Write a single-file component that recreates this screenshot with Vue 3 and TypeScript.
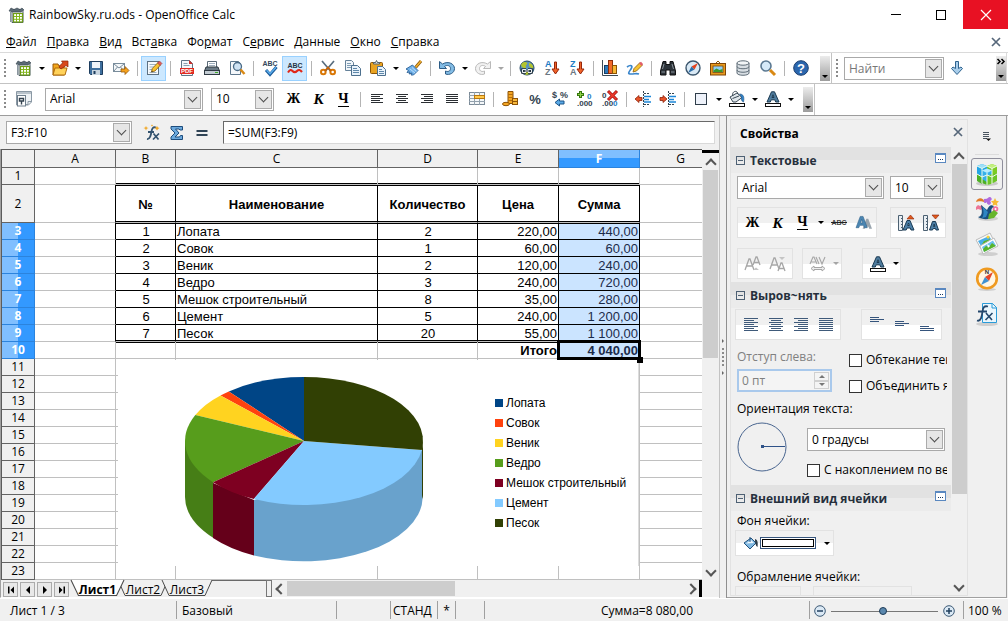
<script setup lang="ts">
import { computed, ref } from 'vue'

interface Tool {
  icon?: string
  title?: string
  sep?: boolean
  drop?: boolean
  on?: boolean
  dim?: boolean
  glyph?: string
  cls?: string
}

const icons: Record<string, string> = {
  doc: '<path d="M3 2.500h9l2 2v11H3z" fill="#eef1f3" stroke="#4a5a66"/><path d="M0 4l2-3 3 1.500L8 1l3 1.500L13 1l2 2-3 2H4z" fill="#5b6a75" stroke="#34414b" stroke-width=".6"/><path d="M1.500 4v11" stroke="#8a969e"/><rect x="4.500" y="6.500" width="9" height="8.500" fill="#fff" stroke="#6f9d16" stroke-width="1.200"/><path d="M5 9.500h8M5 12.300h8M7.500 7v8M10.500 7v8" stroke="#84b81c"/>',
  open: '<path d="M1 4h5l1 2h5v9H1z" fill="#f3a71c" stroke="#9a5a08"/><path d="M3 8h12l-2 7H1z" fill="#ffd25a" stroke="#b06c0c"/><path d="M7 7c1-2 2-3 4-4L9.500 1H16v6l-2-1.500L9 9z" fill="#d9481c" stroke="#8a2407" stroke-width=".7"/>',
  save: '<path d="M1.500 1.500h13v13h-12l-1-1z" fill="#3e6f9e" stroke="#1d3d5e"/><rect x="4" y="2" width="8" height="6" fill="#eef4fa"/><rect x="4" y="10" width="8" height="5" fill="#c9d5df"/><rect x="5.500" y="11" width="2" height="3" fill="#1d3d5e"/>',
  mail: '<rect x=".5" y="3.500" width="11" height="8" fill="#f5f8fa" stroke="#7a8d9c"/><path d="M1 4l5 4 5-4M1 11l3.500-4M11 11L7.500 7" fill="none" stroke="#7a8d9c"/><path d="M8 9h4V6.500l4 4-4 4V12H8z" fill="#f5a11c" stroke="#94580a" stroke-width=".8"/>',
  edit: '<rect x="1.500" y="1.500" width="11" height="13" fill="#f6f9fc" stroke="#5d7182"/><path d="M3.500 4.500h7M3.500 7h5M3.500 9.500h4M3.500 12.500h7" stroke="#9db0c0"/><path d="M5.500 12l.8-3.500L12 2.500 14.500 5 9 11z" fill="#f7c331" stroke="#8a5a0a" stroke-width=".8"/><path d="M11.500 3L13.500 1 16 3.500l-2 2z" fill="#e0605a" stroke="#8e2630" stroke-width=".5"/><path d="M5.500 12l.4-1.500 1 1z" fill="#222"/>',
  pdf: '<path d="M2.500.5h8l3 3v12h-11z" fill="#f4f7fa" stroke="#607486"/><path d="M10 0v4h4z" fill="#c9302c"/><path d="M4.500 3.500h4M4.500 5.500h6" stroke="#8b9fb0"/><rect x="1" y="8" width="14" height="6" fill="#e02a22"/><text x="8" y="13" font-size="6" font-weight="bold" fill="#fff" text-anchor="middle" font-family="Liberation Sans,sans-serif">PDF</text>',
  print: '<path d="M3.500 1.500h9v6h-9z" fill="#fff" stroke="#5b6b78"/><path d="M5 3.500h6M5 5.500h6" stroke="#9fb0bf"/><path d="M2 7h12l1.500 4H.5z" fill="#6b7a86" stroke="#2f3a43"/><rect x=".5" y="10.500" width="15" height="4" fill="#c3ccd3" stroke="#2f3a43"/><path d="M11 12.500h3" stroke="#3fae2a"/>',
  preview: '<path d="M1.500 1.500h8l2 2v11h-10z" fill="#f5f8fb" stroke="#5f788e"/><circle cx="8.500" cy="6.500" r="4" fill="#cfe3f4" stroke="#496a86" stroke-width="1.300"/><path d="M11.500 9.500l4 4.500" stroke="#d98914" stroke-width="2.500"/>',
  spell: '<text x="8" y="6" font-size="7" font-weight="bold" fill="#33475a" text-anchor="middle" font-family="Liberation Sans,sans-serif">ABC</text><path d="M4 10l4 4.500L14.500 7" fill="none" stroke="#1c5c9c" stroke-width="3"/><path d="M4.500 10.300l3.500 3.500 6-6.500" fill="none" stroke="#5cb0ee" stroke-width="1.300"/>',
  auto: '<text x="8" y="8" font-size="7" font-weight="bold" fill="#263646" text-anchor="middle" font-family="Liberation Sans,sans-serif">ABC</text><path d="M1 12.500c2-3 3-3 4.500-1.500s3 1.500 4.500 0 3-1.500 5 1" fill="none" stroke="#e02818" stroke-width="2.200"/>',
  cut: '<path d="M2 1l8.500 10M14 1L5.500 11" stroke="#596d7e" stroke-width="1.700"/><circle cx="3.300" cy="12" r="2.300" fill="none" stroke="#d97706" stroke-width="2"/><circle cx="12.700" cy="12" r="2.300" fill="none" stroke="#d97706" stroke-width="2"/><path d="M5 11l3-3.500 3 3.500" fill="none" stroke="#c4630a" stroke-width="1.800"/>',
  copy: '<path d="M.5.5h6l2 2v8h-8z" fill="#f1f6fa" stroke="#66829a"/><path d="M2 3.500h4M2 5.500h5M2 7.500h5" stroke="#7f9db5"/><path d="M6.500 5.500h6l3 3v7h-9z" fill="#e8f2fb" stroke="#4d708e"/><path d="M8 8.500h4M8 10.500h6M8 12.500h6" stroke="#5f88aa"/>',
  paste: '<rect x=".5" y="2.500" width="12" height="11" rx="1" fill="#e9a322" stroke="#8a5507"/><path d="M3.500 4V2.500h2L6.500.500l1 2h2V4z" fill="#dfe5ea" stroke="#54626e"/><path d="M7.500 6.500h5l3 3v6h-8z" fill="#eaf3fb" stroke="#4d708e"/><path d="M9 9.500h3M9 11.500h5M9 13.500h5" stroke="#5f88aa"/>',
  brush: '<path d="M9.500 7.500L15 1" stroke="#8a5507" stroke-width="3"/><path d="M9.500 7.500L15 1" stroke="#f2b12e" stroke-width="1.500"/><path d="M0 9l6.500-4 5.500 5.500L7.500 15H5l1-2-3 1 1-2-3 .5 1.500-2z" fill="#71b2ea" stroke="#285f95" stroke-width=".9"/><path d="M4 9l5 4M6 7.500l4.500 4" stroke="#d3eafb" stroke-width=".8"/>',
  undo: '<path d="M.5 1.500v7h7L5.500 6.500c2.500-2 6-1 6 2s-3 3.500-5 2.500v3c4 1.500 9-1 9-5.500S9.500.5 3.500 4z" fill="#82bbe4" stroke="#2c5c86"/>',
  redo: '<path d="M15.500 1.500v7h-7l2-2c-2.500-2-6-1-6 2s3 3.500 5 2.500v3c-4 1.500-9-1-9-5.500s6-8 12-4.500z" fill="#f1f1f1" stroke="#b9b9b9"/>',
  link: '<circle cx="8" cy="8" r="7" fill="#5b93bd" stroke="#23465f"/><path d="M2 5c2-4 5-3 6-2s-2 2-1 4-4 2-5-2M10 3c3 0 5 4 4 5s-3-1-4-2zM4 12l4-1 3 3-4 1z" fill="#b3c42d"/><path d="M7 9.500H3.500v3H7M9 9.500h3.500v3H9M6 11h4" fill="none" stroke="#24313c" stroke-width="2.600"/><path d="M7 9.500H3.500v3H7M9 9.500h3.500v3H9M6 11h4" fill="none" stroke="#eef2f5"/>',
  az: '<text x="1" y="6.500" font-size="9" font-weight="bold" fill="#1c7cc4" font-family="Liberation Sans,sans-serif">A</text><text x="1" y="15" font-size="9" font-weight="bold" fill="#6b7782" font-family="Liberation Sans,sans-serif">Z</text><path d="M10.500 2h2v7H15l-3.500 5L8 9h2.500z" fill="#f0642a" stroke="#97260a"/>',
  za: '<text x="1" y="6.500" font-size="9" font-weight="bold" fill="#1c7cc4" font-family="Liberation Sans,sans-serif">Z</text><text x="1" y="15" font-size="9" font-weight="bold" fill="#6b7782" font-family="Liberation Sans,sans-serif">A</text><path d="M10.500 2h2v7H15l-3.500 5L8 9h2.500z" fill="#f0642a" stroke="#97260a"/>',
  chart: '<path d="M.5 0v15.500H16" fill="none" stroke="#3c4a55"/><rect x="2.500" y="5.500" width="4" height="8" fill="#2e79b9" stroke="#153e66"/><rect x="6.500" y=".5" width="4" height="13" fill="#f26a2a" stroke="#8e2c0a"/><rect x="10.500" y="5.500" width="4" height="8" fill="#f7b733" stroke="#8a5507"/>',
  draw: '<path d="M0 7c4-3 6-1 4 2s-4 5 0 5 5-1 8 0" fill="none" stroke="#3a86cc" stroke-width="1.700"/><path d="M6 12l1-3.500L13 2.500l2.500 2.500L9.500 11z" fill="#f7c331" stroke="#8a5a0a" stroke-width=".8"/><path d="M12 3.500l2-1.800L16 4l-1.500 2z" fill="#e25d6c"/>',
  find: '<path d="M3 1.500h3v3h4v-3h3L15.500 11v4H10v-5H6v5H.5v-4z" fill="#2c3339" stroke="#111"/><path d="M1.500 12h3.500M11 12h3.500M4 4L2.500 9M12 4l1.500 5" stroke="#8a949c"/>',
  nav: '<circle cx="8" cy="8" r="7" fill="#d9e9f5" stroke="#3b566d" stroke-width="1.400"/><path d="M13 3L9.500 9.500 6.500 6.500z" fill="#e5431d"/><path d="M3 13l3.500-6.500 3 3z" fill="#2e6ea8"/>',
  gallery: '<path d="M5 4l3-3 3 3" fill="none" stroke="#8c5a0d"/><rect x=".5" y="3.500" width="15" height="11.500" fill="#e89a1e" stroke="#7e4607"/><rect x="3" y="6" width="10" height="6.500" fill="#8fd0f5" stroke="#7e4607" stroke-width=".8"/><path d="M3.500 10.500l3-2 3 1.500 3-1v3h-9z" fill="#3c9a2c"/>',
  db: '<path d="M2 3v10c0 3 12 3 12 0V3" fill="#d8dee3" stroke="#5f6d78"/><ellipse cx="8" cy="3" rx="6" ry="2.200" fill="#f2f5f7" stroke="#5f6d78"/><path d="M2 6.500c0 3 12 3 12 0M2 10c0 3 12 3 12 0" fill="none" stroke="#5f6d78"/>',
  zoom: '<circle cx="6" cy="6" r="5" fill="#d5e9f8" stroke="#5a7891" stroke-width="1.600"/><path d="M10 10l5 5" stroke="#d98914" stroke-width="3"/>',
  help: '<circle cx="8" cy="8" r="7.300" fill="#2b66ad" stroke="#1b3f70"/><text x="8" y="12.500" font-size="13" font-weight="bold" fill="#fff" text-anchor="middle" font-family="Liberation Sans,sans-serif">?</text>',
  styles: '<path d="M.5.500h15v10.500l-3 3H.5z" fill="#eef2f5" stroke="#8a98a4"/><path d="M1 2h14" stroke="#b9c3cb" stroke-width="2"/><rect x="1.500" y="4.500" width="8" height="10.500" fill="#fff" stroke="#6f7f8c"/><path d="M3.500 7.500h4v2.500h-4zM5.500 10v3.500" fill="none" stroke="#33424f" stroke-width="1.400"/><path d="M10 13.500h2v-3h3" fill="none" stroke="#8a98a4"/>',
  left: '<path d="M2 3.500h12M2 5.500h9M2 7.500h12M2 9.500h9M2 11.500h12" stroke="#2b2f33"/>',
  center: '<path d="M2 3.500h12M4 5.500h8M2 7.500h12M4 9.500h8M2 11.500h12" stroke="#2b2f33"/>',
  right: '<path d="M2 3.500h12M5 5.500h9M2 7.500h12M5 9.500h9M2 11.500h12" stroke="#2b2f33"/>',
  just: '<path d="M2 3.500h12M2 5.500h12M2 7.500h12M2 9.500h12M2 11.500h12" stroke="#2b2f33"/>',
  merge: '<rect x=".5" y="1.500" width="15" height="12" fill="#f4f7f9" stroke="#7c8b98"/><path d="M0 4.500h16M0 7.500h16M0 10.500h16M5.500 1v13M10.500 1v13" stroke="#93a1ad"/><rect x="5.500" y="4.500" width="10" height="3" fill="#ffc94a" stroke="#b9770f"/>',
  coins: '<path d="M6 .5h5v12H6z" fill="#f5a623" stroke="#8c5206"/><path d="M6 3.500h5M6 6.500h5M6 9.500h5" stroke="#b36e0c"/><rect x="10.500" y="7.500" width="5" height="6" fill="#f8b93c" stroke="#8c5206"/><path d="M10.500 10.500h5" stroke="#8c5206"/><ellipse cx="4" cy="13" rx="3.500" ry="1.700" fill="#f5a623" stroke="#8c5206"/>',
  pct: '<text x="8" y="13" font-size="13" font-weight="bold" fill="#33434f" text-anchor="middle" font-family="Liberation Sans,sans-serif">%</text>',
  std: '<text x="0" y="7" font-size="9" font-weight="bold" fill="#33434f" font-family="Liberation Sans,sans-serif">$</text><text x="8" y="7" font-size="9" font-weight="bold" fill="#33434f" font-family="Liberation Sans,sans-serif">%</text><path d="M3 11.500L7.500 8v2H12v3H7.500v2z" fill="#5aa9e6" stroke="#1c5488"/>',
  adddec: '<path d="M3.500 0v7M0 3.500h7" stroke="#37780f" stroke-width="3"/><path d="M3.500 1v5M1 3.500h5" stroke="#8fd14a"/><text x="10" y="8" font-size="8" font-weight="bold" fill="#1c7cc4" font-family="Liberation Sans,sans-serif">0</text><text x="0" y="15" font-size="8" font-weight="bold" fill="#33434f" font-family="Liberation Sans,sans-serif">.000</text>',
  deldec: '<text x="0" y="7" font-size="8" font-weight="bold" fill="#33434f" font-family="Liberation Sans,sans-serif">0</text><path d="M6 0l9 9M15 0L6 9" stroke="#a30f0f" stroke-width="3"/><path d="M6.500.5l8 8M14.500.5l-8 8" stroke="#ef3a2c" stroke-width="1.600"/><text x="0" y="15" font-size="8" font-weight="bold" fill="#33434f" font-family="Liberation Sans,sans-serif">.00</text><text x="11" y="15" font-size="8" font-weight="bold" fill="#1c7cc4" font-family="Liberation Sans,sans-serif">0</text>',
  outdent: '<path d="M9 2.500h6M9 13.500h6M8.500 0v16" stroke="#33434f" stroke-dasharray="2 1"/><path d="M9 5.500h7M9 8.500h5M9 11h7" stroke="#1c86d8" stroke-width="1.700"/><path d="M0 8L4 4.500v2h3v3H4v2z" fill="#e8542a" stroke="#8b220a" stroke-width=".8"/>',
  indent: '<path d="M9 2.500h6M9 13.500h6M8.500 0v16" stroke="#33434f" stroke-dasharray="2 1"/><path d="M9 5.500h7M9 8.500h5M9 11h7" stroke="#1c86d8" stroke-width="1.700"/><path d="M7 8L3 4.500v2H0v3h3v2z" fill="#e8542a" stroke="#8b220a" stroke-width=".8"/>',
  border: '<rect x="2.500" y="2.500" width="11" height="11" fill="#eef2fa" stroke="#2f3d4a"/>',
  fill: '<path d="M1 6l7-4 5 4.500-6 4.500H4z" fill="#dfe6eb" stroke="#3a4955"/><path d="M4 5c-2-4 4-7 5-2M3.500 7.500L10 5" fill="none" stroke="#3a4955"/><path d="M10.500 3c4 0 5 3 4 8-2-.5-2.500-3-2-5z" fill="#2f82c9" stroke="#1b4f80" stroke-width=".6"/><rect x=".5" y="12.500" width="15" height="3" fill="#fff" stroke="#111"/>',
  color: '<path d="M2 11L6.500.8h3L14 11h-3.300l-.9-2.200H6.200L5.300 11zM7 6.500h2L8 3.700z" fill="#4f7c9e" stroke="#1b3a52"/><rect x=".5" y="12.500" width="15" height="3" fill="#fff" stroke="#111"/>',
  down: '<path d="M6.500 1.500h3v7L12 7l1.500 1.500L8 14.500 2.500 8.500 4 7l2.500 1.500z" fill="#a8cdea" stroke="#2f638f"/>',
  fx: '<path d="M12 2.500c-3-1-4 1-4.500 4S6 14.500 3 14M4 7h6" fill="none" stroke="#33536f" stroke-width="1.800"/><path d="M9.500 8.500l5 6M15 8.500l-6 6" stroke="#33536f" stroke-width="1.700"/><path d="M2 1l.8 1.500L4.500 3l-1.700.8L2 5.500l-.8-1.700L-.5 3l1.700-.5zM13 1l1 1.500 1.500.5L14 4l-1 1.500L12 4l-1.500-1L12 2.500zM8-.5l1 1-1 1-1-1z" fill="#f0a92a"/>',
  sum: '<path d="M2 1.500h11.500V5H11l-1-1H6.500L10 8l-4 4h4.500l1-1.500h2v4H2V12l4-4-4-4z" fill="#6ba8dc" stroke="#1d4c7c"/>',
  eq: '<path d="M2.500 6h11M2.500 10h11" stroke="#2f4355" stroke-width="1.800"/>',
  abc: '<text x="8" y="10" font-size="7" font-weight="bold" fill="#444" text-anchor="middle" font-family="Liberation Sans,sans-serif">ABC</text><path d="M0 7.500h16" stroke="#222"/>',
  shadow: '<path d="M7 14L11 3.500h2L17 14h-3l-.7-2h-3l-.8 2z" fill="#9aa5ae"/><path d="M0 13L4.500 1h3L12 13H9l-1-2.500H4L3 13zM5 8h2L6 4z" fill="#4b86b2" stroke="#2d5f88" stroke-width=".6"/>',
  grow: '<path d="M.5.5h4v15h-4z" fill="#e8eef3" stroke="#4c6172"/><path d="M3 3.500h2M3 6.500h2M3 9.500h2M3 12.500h2" stroke="#4c6172"/><path d="M5 15L9 5.500h3L16 15h-3l-.8-2H9l-.8 2zM9.700 10.500h1.600L10.500 8z" fill="#4c7fa6" stroke="#183a55"/><path d="M9 4l3.500-4L16 4z" fill="#e05a1c" stroke="#8b220a" stroke-width=".6"/>',
  shrink: '<path d="M.5.5h4v15h-4z" fill="#e8eef3" stroke="#4c6172"/><path d="M3 3.500h2M3 6.500h2M3 9.500h2M3 12.500h2" stroke="#4c6172"/><path d="M6.500 15l3-8.500h3l3 8.500H13l-.5-1.500h-2.300L9.500 15zM10.500 11.500h1.300L11.200 9z" fill="#4c7fa6" stroke="#183a55"/><path d="M9 0h7l-3.500 4z" fill="#e05a1c" stroke="#8b220a" stroke-width=".6"/>',
  sup: '<path d="M0 14L4 3h1l4 11M2 10h5M8 9l3-8h1l3 8M9 6.500h5" fill="none" stroke="#a6a6a6" stroke-width="1.300"/><path d="M8 14l3-2.500 3 2.500z" fill="#c4c4c4"/>',
  sub: '<path d="M0 13L4 2h1l4 11M2 9h5M8 15l3-8h1l3 8M9 12.500h5" fill="none" stroke="#a6a6a6" stroke-width="1.300"/><path d="M9 1h6l-3 3z" fill="#c4c4c4"/>',
  spacing: '<path d="M0 8l3-7h1l3 7M1.500 6h4M6 1l3 7M9 1l3 7 3-7" fill="none" stroke="#a6a6a6" stroke-width="1.100"/><path d="M1 12.500L4 10v1.500h8V10l3 2.500-3 2.500v-1.500H4V15z" fill="#eee" stroke="#a6a6a6"/>',
  sl: '<path d="M1 1.500h14M1 3.500h10M1 5.500h14M1 7.500h10M1 9.500h14M1 11.500h10M1 13.500h14" stroke="#3f5a7a"/>',
  sc: '<path d="M1 1.500h14M3 3.500h10M1 5.500h14M3 7.500h10M1 9.500h14M3 11.500h10M1 13.500h14" stroke="#3f5a7a"/>',
  sr: '<path d="M1 1.500h14M5 3.500h10M1 5.500h14M5 7.500h10M1 9.500h14M5 11.500h10M1 13.500h14" stroke="#3f5a7a"/>',
  sj: '<path d="M1 1.500h14M1 3.500h14M1 5.500h14M1 7.500h14M1 9.500h14M1 11.500h14M1 13.500h14" stroke="#3f5a7a"/>',
  vt: '<path d="M1 .5h9M1 2.500h14M1 4.500h9" stroke="#35547c"/>',
  vm: '<path d="M1 4.500h9M1 6.500h14M1 8.500h9" stroke="#35547c"/>',
  vb: '<path d="M1 9.500h9M1 11.500h14M1 13.500h14" stroke="#35547c"/>',
  bucket: '<path d="M1 8l7-5 5 5-6 6z" fill="#7fb8e2" stroke="#24527c"/><path d="M3 8.500l5-3.500 3 3z" fill="#eef6fc"/><path d="M7 7V2" stroke="#24527c"/><path d="M12 4c3 1 3 4 2.500 8-2-1-2-4-2.500-6z" fill="#2b3a47"/>',
}

const deckIcons: { title: string; svg: string }[] = [
  { title: 'Свойства', svg: '<ellipse cx="12" cy="21.500" rx="11" ry="2.500" fill="#c9c9c9"/><path d="M2 4l5-2 5 2v8l-5 3-5-3z" fill="#22a4e6"/><path d="M2 4l5-2 5 2-5 2.500z" fill="#9be0fa"/><path d="M12 4l5-2 5 2v8l-5 3-5-3z" fill="#7ccb22"/><path d="M12 4l5-2 5 2-5 2.500z" fill="#c2f07c"/><path d="M2 12l5 3v7l-5-3zM12 14v9l-5-2v-7z" fill="#4db026"/><path d="M7 8.500l5-2 5 2v8.500l-5 3-5-3z" fill="#35b0ea"/><path d="M7 8.500l5-2 5 2-5 2.500z" fill="#b8ecfc"/><path d="M12 14l5-2 5-1v8l-6 3-4 1z" fill="#6cc528"/><path d="M2 4l5 2.500v15M12 11v12M17 6.500V22M7 6.500L12 4l5 2.500L22 4M2 12l5 3 5-2 5 2 5-3" fill="none" stroke="#eefbea"/>' },
  { title: 'Стили', svg: '<ellipse cx="13" cy="21.500" rx="10" ry="2.500" fill="#d0d0d0"/><path d="M13 1a2 2 0 1 1 2 3 2 2 0 1 1-3 1 2 2 0 1 1-1-3z" fill="#b069dc"/><path d="M20 1l1.300 2.700 2.700.5-2 2 .5 2.800-2.500-1.300L17.500 9l.5-2.800-2-2 2.700-.5z" fill="#f8ba34"/><circle cx="20.500" cy="12" r="2.800" fill="#f06ea0"/><circle cx="20.500" cy="12" r="1" fill="#fff"/><path d="M1 5c1-5 8-5 8 0-2-1-6-1-8 0z" fill="#e07a28"/><path d="M1 10l2-2 2 1 2-1 1 3-2 2-3-1-2 1z" fill="#ed7596"/><path d="M3 20c5-1 4-6 3-12l6 5c2-5 5-6 7-3-4 1-3 6 0 9-4 4-11 4-16 1z" fill="#1b4f7e"/><path d="M7 9l6 6-2 5-4 1c2-3 2-8 0-12z" fill="#2e86c4"/><path d="M14 17l5-4 4 3-4 5-6 1z" fill="#67b52c"/>' },
  { title: 'Галерея', svg: '<ellipse cx="13" cy="22" rx="10" ry="2" fill="#cfcfcf"/><path d="M1 8l14-7 3 6L6 17z" fill="#fafafa" stroke="#bcbcbc"/><path d="M3 9l11-5 2 3L6 14z" fill="#48aee8"/><path d="M6 14l3-5 7-2-8 8z" fill="#58b42b"/><path d="M5 14L19 6l4 8-15 8z" fill="#fff" stroke="#bdbdbd"/><path d="M7 15l11-6.500 3 5-12 6.500z" fill="#6cc0ee"/><path d="M8 17l3-3 3 1 3-4 4 3-12 6z" fill="#58b42b"/><path d="M12 12l3 2-2 2z" fill="#fff"/><circle cx="13" cy="5" r="1.500" fill="#f8d33a"/>' },
  { title: 'Навигатор', svg: '<ellipse cx="12" cy="22.500" rx="9" ry="1.500" fill="#cfcfcf"/><circle cx="12" cy="11.500" r="9.800" fill="#fff6e4" stroke="#ef9a20" stroke-width="2.600"/><path d="M18 5l-4 9-4-4z" fill="#e4462a"/><path d="M6 18l4-8 4 4z" fill="#3f91d0"/><text x="12" y="7" font-size="6" font-weight="bold" fill="#333" text-anchor="middle" font-family="Liberation Sans,sans-serif">N</text>' },
  { title: 'Функции', svg: '<ellipse cx="12" cy="22" rx="11" ry="2" fill="#cfcfcf"/><path d="M7.500 1.500h10l4 4v15h-14z" fill="#eaf6fd" stroke="#2a9bd8"/><path d="M17 1v5h5" fill="none" stroke="#2a9bd8"/><path d="M13 4.500c-4-1-5 1-5.500 5S6 20 2 18.500M3 9.500h9" fill="none" stroke="#24476c" stroke-width="1.800"/><path d="M11 11l6 7M17.500 11l-7 7" stroke="#24476c" stroke-width="1.600"/>' },
]

const menu: [string, string, string][] = [
  ['', 'Ф', 'айл'], ['', 'П', 'равка'], ['', 'В', 'ид'], ['Вст', 'а', 'вка'], ['Фо', 'р', 'мат'],
  ['С', 'е', 'рвис'], ['', 'Д', 'анные'], ['', 'О', 'кно'], ['', 'С', 'правка'],
]

const t = (icon: string, title: string, extra: Partial<Tool> = {}): Tool => ({ icon, title, ...extra })
const sep: Tool = { sep: true }

const standard: Tool[] = [
  t('doc', 'Создать', { drop: true }), t('open', 'Открыть', { drop: true }), t('save', 'Сохранить'), t('mail', 'Отправить'), sep,
  t('edit', 'Правка файла', { on: true }), sep, t('pdf', 'Экспорт в PDF'), t('print', 'Печать'), t('preview', 'Просмотр'), sep,
  t('spell', 'Орфография'), t('auto', 'Автопроверка', { on: true }), sep, t('cut', 'Вырезать'), t('copy', 'Копировать'),
  t('paste', 'Вставить', { drop: true }), t('brush', 'Формат по образцу'), sep, t('undo', 'Отменить', { drop: true }),
  t('redo', 'Повторить', { drop: true, dim: true }), sep, t('link', 'Гиперссылка'), t('az', 'По возрастанию'), t('za', 'По убыванию'), sep,
  t('chart', 'Диаграмма'), t('draw', 'Рисунок'), sep, t('find', 'Найти и заменить'), t('nav', 'Навигатор'), t('gallery', 'Галерея'),
  t('db', 'Источники данных'), t('zoom', 'Масштаб'), sep, t('help', 'Справка'),
]

const format: Tool[] = [
  { glyph: 'Ж', cls: 'b', title: 'Жирный' }, { glyph: 'К', cls: 'i', title: 'Курсив' }, { glyph: 'Ч', cls: 'u', title: 'Подчёркнутый' }, sep,
  t('left', 'По левому краю'), t('center', 'По центру'), t('right', 'По правому краю'), t('just', 'По ширине'), t('merge', 'Объединить'), sep,
  t('coins', 'Денежный'), t('pct', 'Процентный'), t('std', 'Стандартный'), t('adddec', 'Добавить разряд'), t('deldec', 'Удалить разряд'), sep,
  t('outdent', 'Уменьшить отступ'), t('indent', 'Увеличить отступ'), sep,
  t('border', 'Обрамление', { drop: true }), t('fill', 'Цвет фона', { drop: true }), t('color', 'Цвет шрифта', { drop: true }),
]

interface Item { name: string; qty: number; price: number; color: string }
const items: Item[] = [
  { name: 'Лопата', qty: 2, price: 220, color: '#004586' },
  { name: 'Совок', qty: 1, price: 60, color: '#ff420e' },
  { name: 'Веник', qty: 2, price: 120, color: '#ffd320' },
  { name: 'Ведро', qty: 3, price: 240, color: '#579d1c' },
  { name: 'Мешок строительный', qty: 8, price: 35, color: '#7e0021' },
  { name: 'Цемент', qty: 5, price: 240, color: '#83caff' },
  { name: 'Песок', qty: 20, price: 55, color: '#314004' },
]

const money = (n: number): string => `${String(n).replace(/\B(?=(\d{3})+$)/g, ' ')},00`
const total = computed(() => items.reduce((s, i) => s + i.qty * i.price, 0))
const columns = ['A', 'B', 'C', 'D', 'E', 'F', 'G']
const tailRows = Array.from({ length: 13 }, (_, i) => i + 11)

const CX = 119
const CY = 65
const RX = 119
const RY = 64
const slices = computed(() => {
  let angle = 0
  const point = (a: number): string => `${(CX - RX * Math.sin(a)).toFixed(2)} ${(CY - RY * Math.cos(a)).toFixed(2)}`
  return items.map((i) => {
    const next = angle + (i.qty * i.price * 2 * Math.PI) / total.value
    const d = `M${CX} ${CY}L${point(angle)}A${RX} ${RY} 0 0 0 ${point(next)}Z`
    angle = next
    return { d, color: i.color }
  })
})

const find = ref('')
const cell = ref('F3:F10')
const formula = ref('=SUM(F3:F9)')
const zoomLevel = ref(48)
const sheet = ref('Лист1')
</script>

<template>
  <div class="window">
    <header class="title">
      <svg class="ic" viewBox="0 0 16 16" v-html="icons.doc"></svg>
      <span class="name">RainbowSky.ru.ods - OpenOffice Calc</span>
      <button class="win" aria-label="Свернуть"><svg viewBox="0 0 10 10"><path d="M0 4.500h10" stroke="#000" /></svg></button>
      <button class="win" aria-label="Развернуть"><svg viewBox="0 0 10 10"><rect x=".5" y=".5" width="9" height="9" fill="none" stroke="#000" /></svg></button>
      <button class="win close" aria-label="Закрыть"><svg viewBox="0 0 10 10"><path d="M0 0l10 10M10 0L0 10" stroke="#fff" stroke-width="1.200" /></svg></button>
    </header>

    <nav class="menu">
      <a v-for="m in menu" :key="m.join('')" href="#">{{ m[0] }}<u>{{ m[1] }}</u>{{ m[2] }}</a>
      <button class="doc-close" aria-label="Закрыть документ"><svg viewBox="0 0 8 8"><path d="M0 0l8 8M8 0L0 8" stroke="#56677a" stroke-width="1.700" /></svg></button>
    </nav>

    <div class="bar">
      <i class="grip"></i>
      <template v-for="(b, k) in standard" :key="k">
        <i v-if="b.sep" class="sep"></i>
        <template v-else>
          <button class="tb" :class="{ on: b.on }" :aria-label="b.title"><svg class="ic" viewBox="0 0 16 16" v-html="icons[b.icon!]"></svg></button>
          <button v-if="b.drop" class="dd" :class="{ dim: b.dim }" :aria-label="b.title + ': список'"></button>
        </template>
      </template>
      <button class="more" aria-label="Ещё"></button>
      <div class="findbar">
        <i class="grip"></i>
        <span class="combo find"><input v-model="find" placeholder="Найти" aria-label="Найти" /><button class="chev" aria-label="Список поиска"></button></span>
        <button class="tb" aria-label="Найти далее"><svg class="ic" viewBox="0 0 16 16" v-html="icons.down"></svg></button>
        <button class="more last" aria-label="Ещё"><svg viewBox="0 0 8 5"><path d="M.5 0L3 2.500.5 5M4.500 0L7 2.500 4.500 5" fill="none" stroke="#000" stroke-width="1.500" /></svg></button>
      </div>
    </div>

    <div class="bar second">
      <i class="grip"></i>
      <button class="tb" aria-label="Стили"><svg class="ic" viewBox="0 0 16 16" v-html="icons.styles"></svg></button>
      <span class="combo font"><select aria-label="Шрифт"><option>Arial</option></select><i class="chev"></i></span>
      <span class="combo size"><select aria-label="Размер"><option>10</option></select><i class="chev"></i></span>
      <template v-for="(b, k) in format" :key="k">
        <i v-if="b.sep" class="sep"></i>
        <template v-else>
          <button class="tb" :aria-label="b.title">
            <span v-if="b.glyph" class="gl" :class="b.cls">{{ b.glyph }}</span>
            <svg v-else class="ic" viewBox="0 0 16 16" v-html="icons[b.icon!]"></svg>
          </button>
          <button v-if="b.drop" class="dd" :aria-label="b.title + ': список'"></button>
        </template>
      </template>
      <button class="more" aria-label="Ещё"></button>
      <i class="edge"></i>
    </div>

    <div class="body">
      <main class="work">
        <div class="formula">
          <span class="combo cellname"><input v-model="cell" aria-label="Область листа" /><button class="chev" aria-label="Список областей"></button></span>
          <button class="tb" aria-label="Мастер функций"><svg class="ic" viewBox="0 0 16 16" v-html="icons.fx"></svg></button>
          <button class="tb" aria-label="Сумма"><svg class="ic" viewBox="0 0 16 16" v-html="icons.sum"></svg></button>
          <button class="tb" aria-label="Функция"><svg class="ic" viewBox="0 0 16 16" v-html="icons.eq"></svg></button>
          <input v-model="formula" class="line" aria-label="Строка формул" />
        </div>

        <div class="sheet">
          <div class="view">
            <table>
              <colgroup><col class="h" /><col class="a" /><col class="b" /><col class="c" /><col class="d" /><col class="a" /><col class="a" /><col /></colgroup>
              <thead>
                <tr><th></th><th v-for="c in columns" :key="c" :class="{ sel: c === 'F' }">{{ c }}</th></tr>
              </thead>
              <tbody>
                <tr class="first"><th>1</th><td></td><td v-for="n in 5" :key="n"></td><td></td></tr>
                <tr class="heads">
                  <th>2</th><td></td><td>№</td><td>Наименование</td><td>Количество</td><td>Цена</td><td>Сумма</td><td></td>
                </tr>
                <tr v-for="(r, k) in items" :key="r.name" class="item">
                  <th class="sel">{{ k + 3 }}</th><td></td><td class="mid">{{ k + 1 }}</td><td>{{ r.name }}</td><td class="mid">{{ r.qty }}</td>
                  <td class="num">{{ money(r.price) }}</td><td class="num picked">{{ money(r.qty * r.price) }}</td><td></td>
                </tr>
                <tr class="total">
                  <th class="sel">10</th><td></td><td></td><td></td><td></td><td class="num">Итого</td><td class="num active">{{ money(total) }}</td><td></td>
                </tr>
                <tr v-for="n in tailRows" :key="n"><th>{{ n }}</th><td v-for="c in columns" :key="c"></td></tr>
              </tbody>
            </table>
            <figure class="chart">
              <svg class="pie" viewBox="0 0 238 186" role="img" aria-label="Круговая диаграмма">
                <path d="M0 65v56A119 64 0 0 0 28.500 162V65z" fill="#467e16" />
                <path d="M28 107v55A119 64 0 0 0 69 179.500V124z" fill="#65001a" />
                <path d="M69 124v55.500A119 64 0 0 0 237.500 123V74z" fill="#69a2cc" />
                <path d="M237 73v50q1-2 1-4V65z" fill="#314004" />
                <path v-for="s in slices" :key="s.color" :d="s.d" :fill="s.color" />
              </svg>
              <ul>
                <li v-for="i in items" :key="i.name"><i :style="{ background: i.color }"></i>{{ i.name }}</li>
              </ul>
            </figure>
          </div>
          <div class="vscroll"><i class="split"></i><i class="ar up"></i><i class="thumb"></i><i class="ar dn"></i></div>
        </div>

        <div class="tabs">
          <button class="nv" aria-label="Первый лист"><svg viewBox="0 0 8 8"><path d="M1 .5h1.500v7H1zM7 .5v7L3.500 4z" /></svg></button>
          <button class="nv" aria-label="Предыдущий лист"><svg viewBox="0 0 8 8"><path d="M6 0v8L2 4z" /></svg></button>
          <button class="nv" aria-label="Следующий лист"><svg viewBox="0 0 8 8"><path d="M2 0v8l4-4z" /></svg></button>
          <button class="nv" aria-label="Последний лист"><svg viewBox="0 0 8 8"><path d="M5.500 .5H7v7H5.500zM1 .5v7L4.500 4z" /></svg></button>
          <button v-for="s in ['Лист1', 'Лист2', 'Лист3']" :key="s" class="tab" :class="{ cur: s === sheet }" @click="sheet = s">
            <svg viewBox="0 0 50 17" preserveAspectRatio="none"><path d="M0 0l7 15.500h36L50 0" stroke="#4b4b4b" /></svg><span>{{ s }}</span>
          </button>
          <i class="fillr"></i><i class="split"></i>
          <div class="hscroll"><i class="ar lf"></i><i class="thumb"></i><i class="rest"></i><i class="ar rt"></i></div>
          <i class="blk"></i><i class="corner"></i>
        </div>
      </main>

      <div class="divider"><i class="tri"></i><i class="dots"></i><i class="tri"></i></div>

      <aside class="side">
        <div class="deck">
          <div class="deck-title"><h2>Свойства</h2><button aria-label="Закрыть панель"><svg viewBox="0 0 8 8"><path d="M0 0l8 8M8 0L0 8" stroke="#56677a" stroke-width="1.700" /></svg></button></div>
          <div class="deck-body">
            <div class="panels">
              <section>
                <h3><i class="minus"></i>Текстовые<button class="opts" aria-label="Параметры текста"></button></h3>
                <div class="row r1">
                  <span class="combo pfont"><select aria-label="Имя шрифта"><option>Arial</option></select><i class="chev"></i></span>
                  <span class="combo psize"><select aria-label="Кегль"><option>10</option></select><i class="chev"></i></span>
                </div>
                <div class="row r2">
                  <div class="grp">
                    <button class="tb" aria-label="Жирный"><span class="gl b">Ж</span></button>
                    <button class="tb" aria-label="Курсив"><span class="gl i">К</span></button>
                    <button class="tb" aria-label="Подчёркнутый"><span class="gl u">Ч</span></button>
                    <button class="dd" aria-label="Вид подчёркивания"></button>
                    <button class="tb" aria-label="Зачёркнутый"><svg class="ic" viewBox="0 0 16 16" v-html="icons.abc"></svg></button>
                    <button class="tb" aria-label="Тень"><svg class="ic" viewBox="0 0 17 16" v-html="icons.shadow"></svg></button>
                  </div>
                  <div class="grp end">
                    <button class="tb" aria-label="Увеличить шрифт"><svg class="ic" viewBox="0 0 16 16" v-html="icons.grow"></svg></button>
                    <button class="tb" aria-label="Уменьшить шрифт"><svg class="ic" viewBox="0 0 16 16" v-html="icons.shrink"></svg></button>
                  </div>
                </div>
                <div class="row r3">
                  <div class="grp">
                    <button class="tb" aria-label="Верхний индекс"><svg class="ic" viewBox="0 0 16 16" v-html="icons.sup"></svg></button>
                    <button class="tb" aria-label="Нижний индекс"><svg class="ic" viewBox="0 0 16 16" v-html="icons.sub"></svg></button>
                  </div>
                  <div class="grp">
                    <button class="tb" aria-label="Интервал"><svg class="ic" viewBox="0 0 16 16" v-html="icons.spacing"></svg></button>
                    <button class="dd dim" aria-label="Виды интервала"></button>
                  </div>
                  <div class="grp end">
                    <button class="tb" aria-label="Цвет шрифта"><svg class="ic" viewBox="0 0 16 16" v-html="icons.color"></svg></button>
                    <button class="dd" aria-label="Выбор цвета шрифта"></button>
                  </div>
                </div>
              </section>

              <section>
                <h3><i class="minus"></i>Выров~нять<button class="opts" aria-label="Параметры выравнивания"></button></h3>
                <div class="row wide">
                  <div class="grp">
                    <button v-for="k in ['sl', 'sc', 'sr', 'sj']" :key="k" class="tb" :aria-label="'Выравнивание ' + k"><svg class="ic" viewBox="0 0 16 16" v-html="icons[k]"></svg></button>
                  </div>
                  <div class="grp">
                    <button v-for="k in ['vt', 'vm', 'vb']" :key="k" class="tb" :aria-label="'По вертикали ' + k"><svg class="ic" viewBox="0 0 16 16" v-html="icons[k]"></svg></button>
                  </div>
                </div>
                <div class="cols">
                  <div class="ind">
                    <label for="ind">Отступ слева:</label>
                    <span class="spin"><input id="ind" value="0 пт" disabled /><span><button aria-label="Больше" disabled></button><button class="low" aria-label="Меньше" disabled></button></span></span>
                  </div>
                  <div class="checks">
                    <label><input type="checkbox" />Обтекание текста</label>
                    <label><input type="checkbox" />Объединить ячейки</label>
                  </div>
                </div>
                <label class="cap orient" for="deg">Ориентация текста:</label>
                <div class="cols turn">
                  <svg class="dial" viewBox="0 0 50 50"><circle cx="25" cy="25" r="24" fill="none" stroke="#4a6690" /><path d="M25 24.500h23" stroke="#2f5288" /><rect x="24" y="23" width="3" height="3" fill="#2f5288" /></svg>
                  <div class="stack">
                    <span class="combo deg"><select id="deg"><option>0 градусы</option></select><i class="chev"></i></span>
                    <label><input type="checkbox" />С накоплением по вертикали</label>
                  </div>
                </div>
              </section>

              <section>
                <h3><i class="minus"></i>Внешний вид ячейки<button class="opts" aria-label="Параметры ячейки"></button></h3>
                <p class="cap">Фон ячейки:</p>
                <div class="grp bg">
                  <button class="swatch" aria-label="Фон ячейки"><svg class="ic" viewBox="0 0 16 16" v-html="icons.bucket"></svg><i></i></button>
                  <button class="dd" aria-label="Выбор фона"></button>
                </div>
                <p class="cap low">Обрамление ячейки:</p>
                <div class="row wide peek"><div class="grp"></div><div class="grp"></div></div>
              </section>
            </div>
            <div class="vscroll"><i class="ar up"></i><i class="thumb"></i><i class="ar dn"></i></div>
          </div>
        </div>
        <div class="rail">
          <button class="cfg" aria-label="Параметры боковой панели"><svg viewBox="0 0 12 10"><path d="M2 .5h6M2 2.500h6M2 4.500h6M2 6.500h4" stroke="#4a5560" /><path d="M5 6.500h5L7.500 9z" fill="#111" /></svg></button>
          <button v-for="(d, k) in deckIcons" :key="d.title" class="rt" :class="{ on: k === 0 }" :aria-label="d.title"><svg viewBox="0 0 24 24" v-html="d.svg"></svg></button>
        </div>
      </aside>
    </div>

    <footer class="status">
      <span class="s1">Лист 1 / 3</span><span class="s2">Базовый</span><span class="s3"></span><span class="s4">СТАНД</span><span class="s5">*</span><span class="s6"></span>
      <span class="s7">Сумма=8 080,00</span>
      <div class="zoomer">
        <button aria-label="Уменьшить"><svg viewBox="0 0 12 12"><circle cx="6" cy="6" r="5.300" fill="#dbe9f5" stroke="#3d5a75" /><path d="M3 6h6" stroke="#23415f" stroke-width="1.500" /></svg></button>
        <input v-model="zoomLevel" type="range" min="0" max="100" aria-label="Масштаб" />
        <button aria-label="Увеличить"><svg viewBox="0 0 12 12"><circle cx="6" cy="6" r="5.300" fill="#dbe9f5" stroke="#3d5a75" /><path d="M3 6h6M6 3v6" stroke="#23415f" stroke-width="1.500" /></svg></button>
      </div>
      <span class="s8">100 %</span>
    </footer>
  </div>
</template>

<style>
body { margin: 0; }
</style>

<style scoped>
* { box-sizing: border-box; }
.window { display: flex; flex-direction: column; height: 100vh; overflow: hidden; background: #fff; color: #000; font: 12px/16px "Open Sans", "Noto Sans", sans-serif; }
button, input, select { font: inherit; color: inherit; margin: 0; padding: 0; border: 0; background: none; border-radius: 0; outline: 0; }
i { display: block; flex: none; font-style: normal; }
svg { display: block; overflow: visible; }
.ic { width: 16px; height: 16px; flex: none; }

.title { display: flex; align-items: center; height: 29px; flex: none; padding-left: 9px; }
.name { flex: 1; margin-left: 4px; }
.win { width: 45px; height: 29px; display: grid; place-items: center; }
.win svg { width: 10px; height: 10px; }
.win.close { background: #e81123; }
.menu { display: flex; align-items: center; gap: 10px; height: 24px; flex: none; padding: 2px 8px 0 6px; border-bottom: 1px solid #dadada; }
.menu a { color: #000; text-decoration: none; white-space: nowrap; }
.doc-close { margin-left: auto; }
.doc-close svg, .deck-title svg { width: 8px; height: 8px; }

.bar { display: flex; align-items: center; height: 31px; flex: none; border-bottom: 1px solid #c3c3c3; }
.bar.second { height: 32px; padding-bottom: 1px; border-color: #9c9c9c; }
.grip { width: 2px; height: 19px; margin: 0 5px 0 4px; background: repeating-linear-gradient(#8b8b8b 0 2px, transparent 2px 4px); }
.tb { width: 25px; height: 25px; flex: none; display: grid; place-items: center; }
.tb.on { background: #cce8ff; border: 1px solid #99d1ff; }
.dd { width: 11px; height: 25px; flex: none; display: grid; place-items: center; }
.dd::after { content: ""; border: 3px solid transparent; border-top-color: #000; border-bottom: 0; }
.dd.dim::after { border-top-color: #a5a5a5; }
.sep { width: 1px; height: 15px; margin: 0 3px 0 4px; background: #b4b4b4; }
.more { width: 10px; height: 25px; flex: none; margin-left: 7px; background: linear-gradient(#ececec, #9c9c9c); display: flex; justify-content: center; align-items: flex-end; padding-bottom: 3px; }
.more::after { content: ""; border: 3px solid transparent; border-top-color: #000; border-bottom: 0; }
.findbar { flex: 1; display: flex; align-items: center; height: 30px; margin: 0 1px; border-left: 1px solid #c3c3c3; border-right: 1px solid #dadada; }
.more.last { margin-left: auto; flex-direction: column; align-items: center; justify-content: space-between; padding-top: 3px; }
.more.last svg { width: 8px; height: 5px; }
.edge { width: 1px; height: 31px; margin-left: 1px; background: #c3c3c3; }
.combo { display: flex; align-items: center; flex: none; height: 23px; border: 1px solid #a9a9a9; background: #fff; padding: 1px; position: relative; }
.combo input, .combo select { flex: 1; min-width: 0; width: 100%; height: 100%; padding-left: 3px; appearance: none; }
.combo select { padding-right: 18px; }
.chev { width: 17px; height: 19px; flex: none; border: 1px solid #ababab; background: #e6e6e6; display: grid; place-items: center; }
.combo select + .chev { position: absolute; right: 1px; top: 1px; pointer-events: none; }
.chev::after { content: ""; width: 6px; height: 6px; border: solid #4d4d4d; border-width: 0 1px 1px 0; transform: translateY(-2px) rotate(45deg); }
.combo.find { width: 100px; margin-left: 1px; }
.combo.find input::placeholder { color: #777; opacity: 1; }
.combo.font { width: 158px; margin: 0 8px 0 9px; }
.combo.size { width: 63px; margin-right: 7px; }
.gl { font: bold 15px/18px "Liberation Serif", serif; }
.gl.b, .gl.u { font-size: 14px; }
.gl.i { font-style: italic; }
.gl.u { line-height: 14px; border-bottom: 1px solid #000; }

.body { display: flex; flex: 1; min-height: 0; background: #f0f0f0; }
.work { flex: 1; min-width: 0; display: flex; flex-direction: column; border-right: 1px solid #c3c3c3; }
.formula { display: flex; align-items: center; height: 33px; flex: none; padding: 0 4px 0 6px; }
.cellname { width: 126px; margin-right: 7px; }
.formula .line { flex: 1; height: 23px; margin-left: 9px; padding-left: 4px; background: #fff; border: 1px solid #696969; border-right-color: #d9d9d9; border-bottom-color: #d9d9d9; }
.sheet { flex: 1; min-height: 0; display: flex; border-left: 1px solid #a0a0a0; }
.view { flex: 1; min-width: 0; position: relative; overflow: hidden; background: #fff; border-top: 1px solid #5c5c5c; border-left: 1px solid #5c5c5c; }

table { width: calc(100% + 19px); table-layout: fixed; border-collapse: separate; border-spacing: 0; font: 13px/15px "Liberation Sans", Arial, sans-serif; }
col.h { width: 33px; } col.a { width: 81px; } col.b { width: 60px; } col.c { width: 202px; } col.d { width: 100px; }
th, td { padding: 0; height: 17px; border-right: 1px solid #c0c0c0; border-bottom: 1px solid #c0c0c0; white-space: nowrap; }
td { padding: 1px 0 0; }
tr > :last-child { border-right: 0; }
th { font: 12px/16px "Open Sans", "Noto Sans", sans-serif; background: #f0f0f0; border-color: #646464; }
thead th { height: 18px; }
th.sel { color: #fff; font-weight: 700; background: linear-gradient(90deg, #80bfff 50%, #3399ff 50%); border-color: #2b83dd; }
thead th.sel { background: linear-gradient(#80bfff 50%, #3399ff 50%); }
.first td:nth-child(n+3):nth-child(-n+7) { box-shadow: inset 0 -1px #000; }
.heads td { height: 38px; }
.heads td:nth-child(n+3):nth-child(-n+7) { text-align: center; font-weight: 700; box-shadow: inset 0 1px #000, inset 0 -1px #000; border-right-color: #000; }
.heads td:nth-child(2), .item td:nth-child(2) { border-right-color: #000; }
.item td:nth-child(n+3):nth-child(-n+7) { border-color: #000; padding-left: 1px; }
.item:nth-child(3) td:nth-child(n+3):nth-child(-n+7) { box-shadow: inset 0 1px #000; }
.item:nth-child(9) td:nth-child(n+3):nth-child(-n+7) { box-shadow: inset 0 -1px #000; border-bottom-color: #c0c0c0; }
.item .mid { text-align: center; }
td.num { text-align: right; padding-right: 1px; }
.item td.picked { background: #cbe4ff; color: #1b2b4a; border-right-color: #3399ff; }
.item td:nth-child(6) { border-right-color: #3399ff; }
.total td { font-weight: 700; }
.total td:nth-child(n+3):nth-child(-n+7) { box-shadow: inset 0 1px #000; }
.total td.active { position: relative; z-index: 2; background: #cbe4ff; color: #1b2b4a; }
.active::before { content: ""; position: absolute; inset: -2px; border: 3px solid #000; }
.active::after { content: ""; position: absolute; right: -4px; bottom: -5px; width: 6px; height: 6px; background: #000; }

.chart { position: absolute; left: 116px; right: 63px; top: 210px; height: 206px; margin: 0; background: #fff; z-index: 1; display: flex; padding: 16px 0 0 67px; border-right: 1px solid #dcdcdc; }
.pie { width: 238px; height: 186px; flex: none; }
.chart ul { list-style: none; margin: 17px 0 0 72px; padding: 0; font: 12px/20px "Liberation Sans", Arial, sans-serif; }
.chart li { display: flex; align-items: center; gap: 3px; white-space: nowrap; }
.chart li i { width: 8px; height: 8px; }

.vscroll { width: 17px; flex: none; display: flex; flex-direction: column; align-items: center; background: #f0f0f0; }
.vscroll .thumb { width: 15px; background: #cdcdcd; }
.sheet .vscroll .split { width: 17px; height: 4px; background: #000; border-top: 1px solid #f0f0f0; }
.ar { width: 15px; height: 17px; display: grid; place-items: center; }
.ar::after { content: ""; width: 6px; height: 6px; border: solid #555; border-width: 2px 2px 0 0; }
.ar.up::after { transform: translateY(2px) rotate(-45deg); }
.ar.dn::after { transform: translateY(-1px) rotate(135deg); }
.ar.lf::after { transform: translateX(1px) rotate(-135deg); }
.ar.rt::after { transform: translateX(-1px) rotate(45deg); }
.sheet .thumb { height: 188px; }
.ar.dn { margin-top: auto; }

.tabs { display: flex; align-items: stretch; height: 18px; flex: none; border-left: 1px solid #a0a0a0; border-bottom: 1px solid #fff; }
.nv { width: 15px; height: 15px; margin: 2px 0 0 2px; border: 1px solid #ababab; background: #e8e8e8; display: grid; place-items: center; flex: none; }
.nv svg { width: 8px; height: 8px; }
.tab { position: relative; width: 50px; margin-left: -6px; flex: none; padding-top: 2px; }
.nv + .tab { width: 53px; margin-left: 2px; }
.tab svg { position: absolute; inset: 0; width: 100%; height: 100%; }
.tab path { fill: #f0f0f0; }
.tab.cur { z-index: 1; font-weight: 700; }
.tab.cur path { fill: #fff; }
.tab span { position: relative; }
.fillr { width: 54px; border-top: 1px solid #696969; }
.tabs .split { width: 6px; border: 1px solid #777; }
.hscroll { flex: 1; display: flex; min-width: 0; }
.hscroll .thumb { width: 168px; background: #cdcdcd; margin: 1px 0; }
.hscroll .rest { flex: 1; }
.blk { width: 3px; background: #000; }
.corner { width: 17px; }

.divider { width: 7px; flex: none; display: flex; flex-direction: column; align-items: center; justify-content: center; gap: 5px; border-right: 1px solid #8f8f8f; }
.dots { width: 2px; height: 18px; background: repeating-linear-gradient(#8b8b8b 0 2px, transparent 2px 4px); }
.tri { border: 2px solid transparent; border-left-color: #666; border-right: 0; }
.side { width: 280px; flex: none; display: flex; padding: 3px 0 1px 3px; border-right: 1px solid #a0a0a0; border-bottom: 1px solid #a0a0a0; margin-right: 1px; }
.deck { width: 238px; display: flex; flex-direction: column; border: 1px solid #e2e2e2; }
.deck-title { display: flex; align-items: center; justify-content: space-between; height: 27px; flex: none; padding: 0 5px 0 9px; }
h2, h3 { margin: 0; font-size: 12px; line-height: 16px; font-weight: 700; }
.deck-title button { margin-bottom: 4px; }
.deck-body { flex: 1; min-height: 0; display: flex; }
.panels { flex: 1; min-width: 0; overflow: hidden; }
.deck-body .vscroll { width: 16px; }
.deck-body .thumb { height: 330px; }
h3 { display: flex; align-items: center; height: 26px; padding: 2px 5px 0 5px; background: linear-gradient(#e2e2e2 13px, #ebebeb 13px); color: #26303c; }
.minus { width: 9px; height: 9px; margin: 0 5px 1px 0; border: 1px solid #4d6073; background: linear-gradient(#4d6073, #4d6073) center / 5px 1px no-repeat; }
.opts { width: 11px; height: 10px; margin: 0 0 7px auto; border: 1px solid #5a88c0; border-top-width: 2px; background: repeating-linear-gradient(90deg, #1b3a63 0 1px, #fff 1px 2px) 2px 4px / 5px 1px no-repeat, #fff; }
.row { display: flex; }
.r1 { margin: 3px 0 0 6px; gap: 6px; }
.pfont { width: 147px; } .psize { width: 53px; }
.r2 { margin: 8px 0 0 6px; gap: 13px; }
.r3 { margin: 10px 0 3px 6px; gap: 9px; }
.grp { display: flex; align-items: center; height: 31px; padding: 0 2px; border: 1px solid #e2e2e2; background: linear-gradient(#f0f0f0 15px, #fff 15px); }
.r2 .grp:first-child { padding-right: 0; }
.r3 .grp:nth-child(2) { width: 40px; }
.r3 .grp.end { margin-left: 11px; width: 39px; }
.wide { margin: 1px 0 0 4px; gap: 20px; }
.cols { display: flex; margin: 9px 0 0 6px; gap: 17px; }
.cols label { white-space: nowrap; }
.ind { width: 95px; flex: none; color: #808080; }
.spin { display: flex; height: 23px; margin-top: 4px; border: 2px solid #a9c9ec; padding: 1px; background: #f4f4f4; }
.spin input { flex: 1; min-width: 0; padding-left: 2px; color: #808080; }
.spin > span { width: 15px; display: flex; flex-direction: column; }
.spin button { flex: 1; border: 1px solid #d0d0d0; display: grid; place-items: center; }
.spin button::after { content: ""; border: 3px solid transparent; border-bottom-color: #777; border-top: 0; }
.spin button.low::after { transform: rotate(180deg); }
.checks { flex: 1; min-width: 0; overflow: hidden; display: flex; flex-direction: column; gap: 10px; padding-top: 3px; margin-right: 4px; }
.checks label, .stack label { display: flex; align-items: center; gap: 4px; }
input[type="checkbox"] { appearance: none; width: 13px; height: 13px; flex: none; border: 1px solid #333; background: #fff; }
.cap { display: block; margin: 2px 0 0 6px; }
.orient { margin-top: 7px; }
.turn { margin-top: 3px; gap: 20px; }
.dial { width: 50px; height: 50px; flex: none; margin-top: 2px; }
.stack { flex: 1; min-width: 0; overflow: hidden; margin: 8px 4px 0 0; }
.deg { margin-right: 2px; }
.stack label { margin-top: 11px; }
section:nth-child(2) { padding-bottom: 7px; }
.bg { width: 99px; height: 26px; margin: 1px 0 0 4px; padding-left: 7px; background: linear-gradient(#f0f0f0 12px, #fff 12px); }
.swatch { display: flex; align-items: center; gap: 1px; }
.swatch i { width: 56px; height: 12px; border: 1px solid #35547c; outline: 1px solid #000; outline-offset: -3px; background: #fff; }
.bg .dd { margin-left: 5px; }
.cap.low { margin-top: 13px; }
.peek { gap: 12px; }
.peek .grp:first-child { width: 66px; }
.peek .grp:last-child { width: 99px; }

.rail { flex: 1; display: flex; flex-direction: column; align-items: center; }
.cfg { height: 36px; width: 24px; display: grid; place-items: center; border-bottom: 1px solid #dcdcdc; margin-bottom: 3px; }
.cfg svg { width: 12px; height: 10px; }
.rail .rt { width: 32px; height: 32px; margin-bottom: 3px; display: grid; place-items: center; flex: none; }
.rail .rt.on { border: 1px solid #8f8f9c; border-radius: 3px; }
.rt svg { width: 24px; height: 24px; }

.status { display: flex; align-items: center; height: 23px; flex: none; background: #f0f0f0; border-top: 1px solid #fff; white-space: nowrap; }
.status > span { height: 18px; line-height: 20px; border-right: 1px solid #a0a0a0; }
.s1 { width: 177px; padding-left: 10px; } .s2 { width: 160px; padding-left: 5px; } .s3 { width: 54px; }
.s4 { width: 47px; padding-left: 2px; } .s5 { width: 18px; text-align: center; } .s6 { width: 29px; }
.s7 { flex: 1; text-align: center; }
.zoomer { width: 153px; flex: none; display: flex; align-items: center; justify-content: center; gap: 5px; padding: 2px 4px 0 0; }
.zoomer button svg { width: 12px; height: 12px; }
.zoomer input { width: 107px; height: 12px; appearance: none; background: linear-gradient(#777, #777) center / 100% 1px no-repeat; }
.zoomer input::-webkit-slider-thumb { appearance: none; width: 8px; height: 8px; border-radius: 4px; background: #5b88ae; border: 1px solid #1c3a56; }
.status > .s8 { width: 45px; padding-left: 4px; border-right: 0; border-left: 1px solid #a0a0a0; }
</style>
